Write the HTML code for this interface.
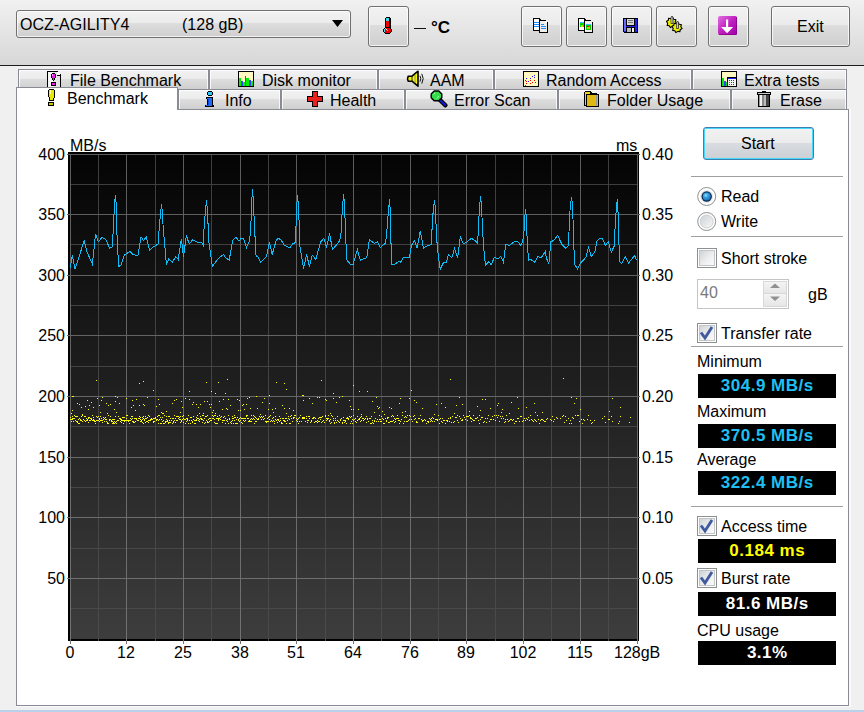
<!DOCTYPE html>
<html><head><meta charset="utf-8">
<style>
*{box-sizing:border-box}
html,body{margin:0;padding:0}
body{width:864px;height:712px;position:relative;overflow:hidden;background:#f0f0f0;font-family:"Liberation Sans",sans-serif;font-size:16px;color:#000}
.a{position:absolute}
.t{position:absolute;white-space:nowrap;line-height:18px;font-size:16px;margin-top:1px;margin-left:-1px}
.btn{position:absolute;border:1px solid #707070;border-radius:3px;background:linear-gradient(#f2f2f2 0%,#ebebeb 47%,#dddddd 47%,#cfcfcf 100%);box-shadow:inset 0 0 0 1px rgba(255,255,255,.75)}
.tab{position:absolute;border:1px solid #898c95;border-bottom:none;background:linear-gradient(#f2f2f2 0%,#ebebeb 50%,#dddddd 50%,#cfcfcf 100%);box-shadow:inset 1px 1px 0 rgba(255,255,255,.8),inset -1px 0 0 rgba(255,255,255,.8)}
.sep{position:absolute;height:1px;background:#a0a0a0;left:691px;width:152px}
.chk{position:absolute;width:20px;height:20px;border:1px solid #8e8f8f;background:#fff}.chk::after{content:"";position:absolute;left:1px;top:1px;right:1px;bottom:1px;border:1px solid #c2c6ca;background:linear-gradient(135deg,#d0d4d8,#f0f0f0 60%,#fafafa)}
.t.r{margin-left:0}
.box{position:absolute;left:698px;width:138px;height:24px;background:#000;color:#fff;font-weight:bold;font-size:17px;text-align:center;line-height:24px;letter-spacing:0.5px;text-indent:0.5px}
.yl{position:absolute;left:20px;width:45px;text-align:right;font-size:16px;line-height:20px;margin-top:1px}
.yr{position:absolute;left:642px;margin-top:1px;width:45px;text-align:left;font-size:16px;line-height:20px}
.xl{position:absolute;top:643px;width:80px;text-align:center;font-size:16px;line-height:20px}
</style></head><body>

<!-- toolbar -->
<div class="a" style="left:0;top:0;width:864px;height:65px;background:linear-gradient(#f1f1f1,#d7d7d7)"></div>
<div class="a" style="left:0;top:65px;width:864px;height:1px;background:#1c1c1c"></div>

<!-- combo -->
<div class="btn" style="left:16px;top:10px;width:335px;height:28px"></div>
<div class="t r" style="left:20px;top:15px">OCZ-AGILITY4</div>
<div class="t r" style="left:182px;top:15px">(128 gB)</div>
<svg class="a" style="left:332px;top:20px" width="12" height="8"><path d="M0 0H11L5.5 7Z" fill="#000"/></svg>

<!-- thermometer button -->
<div class="btn" style="left:368px;top:6px;width:41px;height:41px"></div>
<svg class="a" style="left:383px;top:17px" width="10" height="17" shape-rendering="crispEdges">
 <rect x="3" y="0" width="4" height="1" fill="#000"/><rect x="2" y="1" width="6" height="10" fill="#000"/>
 <rect x="3" y="1" width="3" height="3" fill="#3ad8e8"/>
 <rect x="3" y="4" width="3" height="7" fill="#f00000"/>
 <path d="M2 10H7V11H8V12H9V15H8V16H7V17H2V16H1V15H0V12H1V11H2Z" fill="#000"/>
 <path d="M2 11H7V12H8V15H7V16H2V15H1V12H2Z" fill="#ee0000"/>
 <rect x="1" y="12" width="1" height="3" fill="#5cd6e6"/><rect x="2" y="11" width="1" height="1" fill="#5cd6e6"/>
 <rect x="3" y="12" width="1" height="1" fill="#ffe8e8"/><rect x="4" y="13" width="1" height="1" fill="#ffb0b0"/>
</svg>
<div class="a" style="left:414px;top:28px;width:12px;height:1px;background:#111"></div>
<div class="t r" style="left:431px;top:18px;font-weight:bold;font-size:17px">°C</div>

<!-- toolbar buttons -->
<div class="btn" style="left:521px;top:6px;width:41px;height:41px"></div>
<div class="btn" style="left:566px;top:6px;width:41px;height:41px"></div>
<div class="btn" style="left:611px;top:6px;width:41px;height:41px"></div>
<div class="btn" style="left:656px;top:6px;width:41px;height:41px"></div>
<div class="btn" style="left:708px;top:6px;width:41px;height:41px"></div>
<div class="btn" style="left:771px;top:6px;width:79px;height:41px"></div>
<div class="t r" style="left:797px;top:17px">Exit</div>

<!-- copy icon -->
<svg class="a" style="left:533px;top:18px" width="17" height="16" shape-rendering="crispEdges">
 <path d="M0 0h6l2 2v11h-8z" fill="#000"/><rect x="1" y="1" width="5" height="11" fill="#fff"/>
 <rect x="1" y="4" width="5" height="1" fill="#1a8cff"/><rect x="1" y="6" width="5" height="1" fill="#1a8cff"/><rect x="1" y="8" width="5" height="1" fill="#1a8cff"/>
 <path d="M6 2h6l3 3v10h-9z" fill="#000"/><rect x="7" y="3" width="7" height="11" fill="#eee"/><rect x="12" y="3" width="2" height="2" fill="#fff"/>
 <rect x="8" y="6" width="3" height="1" fill="#1a8cff"/><rect x="8" y="8" width="5" height="1" fill="#1a8cff"/><rect x="8" y="10" width="5" height="1" fill="#1a8cff"/>
</svg>
<!-- copy image icon -->
<svg class="a" style="left:578px;top:18px" width="17" height="16" shape-rendering="crispEdges">
 <path d="M0 0h6l2 2v11h-8z" fill="#000"/><rect x="1" y="1" width="5" height="11" fill="#fff"/>
 <rect x="2" y="4" width="4" height="1" fill="#33bbff"/><rect x="2" y="5" width="4" height="4" fill="#00dd00"/><rect x="3" y="6" width="1" height="1" fill="#ff0000"/><rect x="3" y="7" width="2" height="2" fill="#dddd00"/>
 <path d="M6 2h6l3 3v10h-9z" fill="#000"/><rect x="7" y="3" width="7" height="11" fill="#eee"/>
 <rect x="8" y="6" width="5" height="1" fill="#33bbff"/><rect x="8" y="7" width="5" height="5" fill="#00cc00"/><rect x="9" y="8" width="2" height="1" fill="#ff0000"/><rect x="9" y="9" width="3" height="2" fill="#cccc00"/>
</svg>
<!-- floppy -->
<svg class="a" style="left:623px;top:18px" width="16" height="16" shape-rendering="crispEdges">
 <path d="M0 0h15v15h-14l-1-1z" fill="#000"/>
 <rect x="1" y="1" width="13" height="13" fill="#2222ee"/>
 <rect x="1" y="1" width="2" height="12" fill="#6a6aff"/>
 <rect x="3" y="1" width="9" height="7" fill="#000"/><rect x="4" y="1" width="7" height="6" fill="#d8d8d8"/>
 <rect x="5" y="2" width="5" height="1" fill="#777"/><rect x="5" y="4" width="5" height="1" fill="#777"/>
 <rect x="3" y="9" width="9" height="5" fill="#000"/><rect x="4" y="10" width="4" height="4" fill="#bbb"/><rect x="9" y="10" width="2" height="4" fill="#eee"/>
</svg>
<!-- gears -->
<svg class="a" style="left:666px;top:15px" width="19" height="20">
 <polygon points="10.60,8.53 8.73,9.68 8.37,11.83 6.25,11.33 4.47,12.60 3.32,10.73 1.17,10.37 1.67,8.25 0.40,6.47 2.27,5.32 2.63,3.17 4.75,3.67 6.53,2.40 7.68,4.27 9.83,4.63 9.33,6.75" fill="#eeee00" stroke="#000" stroke-width="1.1" stroke-linejoin="round"/>
 <path d="M5 2.2L6 1L7 2.2V8.5H5Z" fill="#9a9a9a" stroke="#222" stroke-width=".7"/><path d="M5.8 2.5V8" stroke="#eee" stroke-width=".6"/>
 <polygon points="16.10,13.53 14.23,14.68 13.87,16.83 11.75,16.33 9.97,17.60 8.82,15.73 6.67,15.37 7.17,13.25 5.90,11.47 7.77,10.32 8.13,8.17 10.25,8.67 12.03,7.40 13.18,9.27 15.33,9.63 14.83,11.75" fill="#eeee00" stroke="#000" stroke-width="1.1" stroke-linejoin="round"/>
 <path d="M10.5 7.2L11.5 6L12.5 7.2V13.5H10.5Z" fill="#9a9a9a" stroke="#222" stroke-width=".7"/><path d="M11.3 7.5V13" stroke="#eee" stroke-width=".6"/>
</svg>
<!-- purple -->
<svg class="a" style="left:718px;top:16px" width="19" height="19">
 <defs><linearGradient id="pg" x1="0" y1="0" x2="1" y2="1"><stop offset="0" stop-color="#e070e0"/><stop offset=".5" stop-color="#c020c0"/><stop offset="1" stop-color="#a000a8"/></linearGradient></defs>
 <rect x="0" y="0" width="19" height="19" rx="2" fill="url(#pg)"/>
 <path d="M8 3.5h2.2v7.5h4.9l-6 6.3l-6-6.3h4.9z" fill="#fff"/><path d="M1 18.5H18.5V1" fill="none" stroke="#7a0080" stroke-width="1" opacity=".7"/>
</svg>

<!-- tabs row 1 -->
<div class="tab" style="left:18px;top:69px;width:191px;height:20px"></div>
<div class="tab" style="left:209px;top:69px;width:169px;height:20px"></div>
<div class="tab" style="left:378px;top:69px;width:116px;height:20px"></div>
<div class="tab" style="left:494px;top:69px;width:198px;height:20px"></div>
<div class="tab" style="left:692px;top:69px;width:155px;height:20px"></div>
<div class="t r" style="left:70px;top:71px">File Benchmark</div>
<div class="t r" style="left:262px;top:71px">Disk monitor</div>
<div class="t r" style="left:430px;top:71px">AAM</div>
<div class="t r" style="left:546px;top:71px">Random Access</div>
<div class="t r" style="left:744px;top:71px">Extra tests</div>

<!-- row1 icons -->
<svg class="a" style="left:47px;top:71px" width="15" height="17" shape-rendering="crispEdges">
 <path d="M0 0h10l4 4v13h-14z" fill="#000"/><path d="M1 1h9v4h3v11h-12z" fill="#e4e4e4"/><path d="M1 1h5v15h-5z" fill="#f6f6f6"/><path d="M10 1h1l2 2v1h-3z" fill="#fff"/>
 <path d="M5 2h3v1h1v4h-1v2h-1v1h-1v-1h-1v-2h-1v-4h1z" fill="#000"/><path d="M5 3h3v4h-1v2h-1v-2h-1z" fill="#e81ee8"/><rect x="5" y="3" width="1" height="2" fill="#ff9cff"/>
 <rect x="4" y="11" width="5" height="4" fill="#000"/><rect x="5" y="12" width="3" height="2" fill="#e81ee8"/>
</svg>
<svg class="a" style="left:238px;top:71px" width="17" height="17" shape-rendering="crispEdges">
 <rect x="0" y="0" width="16" height="16" fill="#000"/><rect x="1" y="1" width="14" height="14" fill="#fff8c0"/>
 <rect x="1" y="7" width="2" height="8" fill="#00ee00"/><rect x="3" y="10" width="2" height="5" fill="#4040ff"/><rect x="5" y="11" width="2" height="4" fill="#00ee00"/><rect x="7" y="5" width="1" height="10" fill="#4040ff"/><rect x="8" y="7" width="3" height="8" fill="#00ee00"/><rect x="11" y="9" width="2" height="6" fill="#4040ff"/><rect x="13" y="10" width="2" height="5" fill="#00ee00"/>
</svg>
<svg class="a" style="left:406px;top:70px" width="19" height="18">
 <path d="M2.2 6.2Q1 8.7 2.2 11.2H6L12 16.2V1.2L6 6.2Z" fill="#f4f400" stroke="#000" stroke-width="1.6" stroke-linejoin="round"/>
 <path d="M6 6.5V11" stroke="#222" stroke-width="1"/><path d="M9 5v8" stroke="#777" stroke-width=".8"/>
 <path d="M14 5.8Q15.6 8.7 14 11.6M15.8 3.8Q18.6 8.7 15.8 13.6" fill="none" stroke="#111" stroke-width="1"/>
</svg>
<svg class="a" style="left:523px;top:71px" width="17" height="17" shape-rendering="crispEdges">
 <rect x="0" y="0" width="16" height="16" fill="#000"/><rect x="1" y="1" width="14" height="14" fill="#fff8c0"/>
 <g fill="#2020ff"><rect x="3" y="7" width="1" height="1"/><rect x="2" y="9" width="1" height="1"/><rect x="5" y="10" width="1" height="1"/><rect x="7" y="7" width="1" height="1"/><rect x="9" y="5" width="1" height="1"/><rect x="11" y="4" width="1" height="1"/><rect x="11" y="6" width="1" height="1"/></g>
 <g fill="#ff0000"><rect x="3" y="10" width="1" height="1"/><rect x="3" y="12" width="1" height="1"/><rect x="2" y="14" width="1" height="1"/><rect x="7" y="9" width="1" height="1"/><rect x="7" y="12" width="1" height="1"/><rect x="9" y="11" width="1" height="1"/><rect x="11" y="9" width="1" height="1"/><rect x="12" y="11" width="1" height="1"/></g>
</svg>
<svg class="a" style="left:721px;top:71px" width="17" height="17" shape-rendering="crispEdges">
 <rect x="0" y="0" width="16" height="16" fill="#000"/><rect x="1" y="1" width="14" height="14" fill="#fff8c0"/>
 <rect x="1" y="7" width="2" height="8" fill="#00ee00"/><rect x="3" y="10" width="2" height="5" fill="#4040ff"/><rect x="5" y="11" width="1" height="4" fill="#00ee00"/>
 <rect x="6" y="6" width="10" height="10" fill="#000"/><rect x="7" y="7" width="8" height="1" fill="#2020ff"/><rect x="7" y="8" width="8" height="7" fill="#f4f4f4"/>
 <rect x="8" y="9" width="1" height="1" fill="#f00"/><rect x="10" y="9" width="1" height="1" fill="#22f"/><rect x="12" y="9" width="1" height="1" fill="#f00"/>
 <rect x="8" y="11" width="1" height="1" fill="#0c0"/><rect x="10" y="11" width="1" height="1" fill="#f00"/><rect x="12" y="11" width="1" height="1" fill="#f00"/>
 <rect x="8" y="13" width="1" height="1" fill="#f00"/><rect x="10" y="13" width="1" height="1" fill="#f00"/><rect x="12" y="13" width="1" height="1" fill="#22f"/>
</svg>

<!-- panel -->
<div class="a" style="left:16px;top:109px;width:835px;height:598px;background:#fafafa"></div>
<div class="a" style="left:16px;top:109px;width:833px;height:597px;background:#fff;border:1px solid #898c95"></div>

<!-- tabs row 2 -->
<div class="tab" style="left:178px;top:89px;width:103px;height:20px"></div>
<div class="tab" style="left:281px;top:89px;width:124px;height:20px"></div>
<div class="tab" style="left:405px;top:89px;width:153px;height:20px"></div>
<div class="tab" style="left:558px;top:89px;width:173px;height:20px"></div>
<div class="tab" style="left:731px;top:89px;width:116px;height:20px"></div>
<div class="a" style="left:16px;top:87px;width:162px;height:23px;background:#fff;border:1px solid #898c95;border-bottom:none"></div>
<div class="t" style="left:68px;top:89px">Benchmark</div>
<div class="t" style="left:226px;top:91px">Info</div>
<div class="t" style="left:331px;top:91px">Health</div>
<div class="t" style="left:455px;top:91px">Error Scan</div>
<div class="t" style="left:608px;top:91px">Folder Usage</div>
<div class="t" style="left:781px;top:91px">Erase</div>

<!-- row2 icons -->
<svg class="a" style="left:47px;top:89px" width="9" height="17" shape-rendering="crispEdges">
 <path d="M2 0h4l2 2v6l-1 1v3h-5v-3l-1-1v-6z" fill="#000"/><path d="M2 1h4l1 1v6l-1 1v2h-3v-2l-1-1v-6z" fill="#e8e800"/><rect x="3" y="1" width="1" height="4" fill="#ffff99"/>
 <rect x="1" y="13" width="6" height="4" fill="#000"/><rect x="2" y="14" width="4" height="2" fill="#c8c800"/>
</svg>
<svg class="a" style="left:205px;top:90px" width="10" height="18" shape-rendering="crispEdges">
 <path d="M3 1h4v1h1v3h-1v1h-4v-1h-1v-3h1z" fill="#000"/><path d="M3 2h4v3h-4z" fill="#28c8ff"/>
 <path d="M1 7h7v8h1v2h-9v-2h2v-6h-1z" fill="#000"/><path d="M2 8h5v8h-6v-1h1.5v-6.5h-0.5z" fill="#1a6cff"/><rect x="3" y="9" width="1" height="6" fill="#0a4ae0"/>
</svg>
<svg class="a" style="left:307px;top:91px" width="17" height="16" shape-rendering="crispEdges">
 <path d="M5 0h6v5h5v6h-5v5h-6v-5h-5v-6h5z" fill="#000"/>
 <path d="M6 1h4v5h5v4h-5v5h-4v-5h-5v-4h5z" fill="#e82020"/>
</svg>
<svg class="a" style="left:430px;top:90px" width="18" height="18">
 <path d="M8.5 8.5L15.3 15.3" stroke="#000" stroke-width="4.4" stroke-linecap="round"/><path d="M9 9L15 15" stroke="#1414c8" stroke-width="2.3" stroke-linecap="round"/>
 <polygon points="4.2,1 8.8,1 11.8,4 11.8,7.8 8.8,10.8 4.2,10.8 1.2,7.8 1.2,4" fill="#34dc4c" stroke="#000" stroke-width="1.4" stroke-linejoin="round"/>
 <path d="M3.5 4.5L5 3M6.5 8.5L9 6" stroke="#c8ffd0" stroke-width=".8"/>
</svg>
<svg class="a" style="left:584px;top:90px" width="16" height="17" shape-rendering="crispEdges">
 <path d="M1 1h5l2 2h5v13h-13v-14z" fill="#000"/><rect x="1" y="2" width="5" height="13" fill="#f0d020"/>
 <rect x="2" y="4" width="13" height="13" fill="#000"/><rect x="3" y="5" width="11" height="11" fill="#e0b810"/><rect x="12" y="5" width="1" height="11" fill="#999"/>
</svg>
<svg class="a" style="left:757px;top:91px" width="15" height="16" shape-rendering="crispEdges">
 <rect x="0" y="1" width="14" height="3" fill="#000"/><rect x="5" y="0" width="4" height="2" fill="#000"/>
 <rect x="1" y="3" width="12" height="13" fill="#000"/>
 <rect x="2" y="4" width="1" height="11" fill="#999"/><rect x="3" y="4" width="2" height="11" fill="#f0f0f0"/><rect x="5" y="4" width="2" height="11" fill="#888"/><rect x="7" y="4" width="2" height="11" fill="#bbb"/><rect x="9" y="4" width="3" height="11" fill="#444"/>
 <rect x="1" y="2" width="12" height="1" fill="#ccc"/>
</svg>

<!-- chart -->
<svg class="a" style="left:0;top:0" width="864" height="712">
 <defs>
  <linearGradient id="cbg" x1="0" y1="0" x2="0" y2="1"><stop offset="0" stop-color="#040404"/><stop offset="1" stop-color="#3d3d3d"/></linearGradient>
 </defs>
 <rect x="68" y="152" width="571" height="489" fill="#000"/>
 <rect x="70" y="154" width="568" height="485" fill="url(#cbg)"/>
 <rect x="638" y="152" width="1" height="489" fill="#000"/>
 <rect x="68" y="639" width="571" height="2" fill="#000"/>
 <linearGradient id="gmin" gradientUnits="userSpaceOnUse" x1="0" y1="154" x2="0" y2="644"><stop offset="0" stop-color="#3e3e3e"/><stop offset="1" stop-color="#4a4a4a"/></linearGradient>
 <linearGradient id="gmaj" gradientUnits="userSpaceOnUse" x1="0" y1="154" x2="0" y2="644"><stop offset="0" stop-color="#5c5c5c"/><stop offset="1" stop-color="#727272"/></linearGradient>
 <path d="M70 184.5H638M70 244.5H638M70 305.5H638M70 366.5H638M70 426.5H638M70 487.5H638M70 548.5H638M70 608.5H638M98.5 154V641M155.5 154V641M211.5 154V641M268.5 154V641M325.5 154V641M381.5 154V641M438.5 154V641M495.5 154V641M551.5 154V641M608.5 154V641" stroke="url(#gmin)" stroke-width="1" fill="none"/>
 <path d="M67 154.5H640M67 214.5H640M67 275.5H640M67 335.5H640M67 396.5H640M67 457.5H640M67 517.5H640M67 578.5H640M70.5 154V644M126.5 154V644M183.5 154V644M240.5 154V644M296.5 154V644M353.5 154V644M410.5 154V644M466.5 154V644M523.5 154V644M580.5 154V644M637.5 154V644" stroke="url(#gmaj)" stroke-width="1" fill="none"/>
 <path d="M70 417h1v1h-1zM70 419h1v1h-1zM71 419h1v1h-1zM71 421h1v1h-1zM71 413h1v1h-1zM72 419h1v1h-1zM72 416h1v1h-1zM72 418h1v1h-1zM72 410h1v1h-1zM72 396h1v1h-1zM73 418h1v1h-1zM73 421h1v1h-1zM73 421h1v1h-1zM73 396h1v1h-1zM74 418h1v1h-1zM74 415h1v1h-1zM75 420h1v1h-1zM75 416h1v1h-1zM76 416h1v1h-1zM76 421h1v1h-1zM77 422h1v1h-1zM77 416h1v1h-1zM77 421h1v1h-1zM77 403h1v1h-1zM78 423h1v1h-1zM78 419h1v1h-1zM79 418h1v1h-1zM79 423h1v1h-1zM79 404h1v1h-1zM80 420h1v1h-1zM80 419h1v1h-1zM81 416h1v1h-1zM81 420h1v1h-1zM81 407h1v1h-1zM82 415h1v1h-1zM82 421h1v1h-1zM82 414h1v1h-1zM83 419h1v1h-1zM83 419h1v1h-1zM84 420h1v1h-1zM84 416h1v1h-1zM85 421h1v1h-1zM85 416h1v1h-1zM85 406h1v1h-1zM86 420h1v1h-1zM86 418h1v1h-1zM87 420h1v1h-1zM87 419h1v1h-1zM87 400h1v1h-1zM88 418h1v1h-1zM88 417h1v1h-1zM88 422h1v1h-1zM88 409h1v1h-1zM89 417h1v1h-1zM89 420h1v1h-1zM89 405h1v1h-1zM90 420h1v1h-1zM90 418h1v1h-1zM91 419h1v1h-1zM91 418h1v1h-1zM91 402h1v1h-1zM92 415h1v1h-1zM92 420h1v1h-1zM93 417h1v1h-1zM93 419h1v1h-1zM93 420h1v1h-1zM93 407h1v1h-1zM94 420h1v1h-1zM94 421h1v1h-1zM95 423h1v1h-1zM95 421h1v1h-1zM96 416h1v1h-1zM96 420h1v1h-1zM96 380h1v1h-1zM97 420h1v1h-1zM97 417h1v1h-1zM97 398h1v1h-1zM98 420h1v1h-1zM98 416h1v1h-1zM99 418h1v1h-1zM99 421h1v1h-1zM99 419h1v1h-1zM99 405h1v1h-1zM100 420h1v1h-1zM100 416h1v1h-1zM100 412h1v1h-1zM101 420h1v1h-1zM101 418h1v1h-1zM101 400h1v1h-1zM102 420h1v1h-1zM102 422h1v1h-1zM102 397h1v1h-1zM103 419h1v1h-1zM103 417h1v1h-1zM104 418h1v1h-1zM104 421h1v1h-1zM105 419h1v1h-1zM105 417h1v1h-1zM105 419h1v1h-1zM106 419h1v1h-1zM106 421h1v1h-1zM106 403h1v1h-1zM107 422h1v1h-1zM107 423h1v1h-1zM107 413h1v1h-1zM108 415h1v1h-1zM108 423h1v1h-1zM108 405h1v1h-1zM109 419h1v1h-1zM109 420h1v1h-1zM110 419h1v1h-1zM110 416h1v1h-1zM110 404h1v1h-1zM111 420h1v1h-1zM111 421h1v1h-1zM112 421h1v1h-1zM112 419h1v1h-1zM112 423h1v1h-1zM113 419h1v1h-1zM113 423h1v1h-1zM113 422h1v1h-1zM114 423h1v1h-1zM114 421h1v1h-1zM114 419h1v1h-1zM114 409h1v1h-1zM115 416h1v1h-1zM115 422h1v1h-1zM115 401h1v1h-1zM115 396h1v1h-1zM116 423h1v1h-1zM116 421h1v1h-1zM116 412h1v1h-1zM117 420h1v1h-1zM117 420h1v1h-1zM117 397h1v1h-1zM118 416h1v1h-1zM118 420h1v1h-1zM119 418h1v1h-1zM119 418h1v1h-1zM119 403h1v1h-1zM120 421h1v1h-1zM120 419h1v1h-1zM120 418h1v1h-1zM121 422h1v1h-1zM121 419h1v1h-1zM121 420h1v1h-1zM122 420h1v1h-1zM122 417h1v1h-1zM123 420h1v1h-1zM123 423h1v1h-1zM123 417h1v1h-1zM124 417h1v1h-1zM124 420h1v1h-1zM124 421h1v1h-1zM125 420h1v1h-1zM125 420h1v1h-1zM126 420h1v1h-1zM126 415h1v1h-1zM126 418h1v1h-1zM126 398h1v1h-1zM127 420h1v1h-1zM127 415h1v1h-1zM128 421h1v1h-1zM128 420h1v1h-1zM129 420h1v1h-1zM129 420h1v1h-1zM129 423h1v1h-1zM130 418h1v1h-1zM130 420h1v1h-1zM131 419h1v1h-1zM131 416h1v1h-1zM131 407h1v1h-1zM132 416h1v1h-1zM132 418h1v1h-1zM132 421h1v1h-1zM132 400h1v1h-1zM133 422h1v1h-1zM133 421h1v1h-1zM133 421h1v1h-1zM133 405h1v1h-1zM134 418h1v1h-1zM134 422h1v1h-1zM135 421h1v1h-1zM135 418h1v1h-1zM135 410h1v1h-1zM136 419h1v1h-1zM136 418h1v1h-1zM136 399h1v1h-1zM137 420h1v1h-1zM137 420h1v1h-1zM137 420h1v1h-1zM138 418h1v1h-1zM138 420h1v1h-1zM139 418h1v1h-1zM139 416h1v1h-1zM139 405h1v1h-1zM139 383h1v1h-1zM140 417h1v1h-1zM140 419h1v1h-1zM140 421h1v1h-1zM141 420h1v1h-1zM141 421h1v1h-1zM141 420h1v1h-1zM142 422h1v1h-1zM142 417h1v1h-1zM142 419h1v1h-1zM143 416h1v1h-1zM143 423h1v1h-1zM143 418h1v1h-1zM143 404h1v1h-1zM143 381h1v1h-1zM144 419h1v1h-1zM144 420h1v1h-1zM144 405h1v1h-1zM145 422h1v1h-1zM145 418h1v1h-1zM145 416h1v1h-1zM146 418h1v1h-1zM146 421h1v1h-1zM146 418h1v1h-1zM147 421h1v1h-1zM147 417h1v1h-1zM147 397h1v1h-1zM148 415h1v1h-1zM148 422h1v1h-1zM148 420h1v1h-1zM149 420h1v1h-1zM149 416h1v1h-1zM150 420h1v1h-1zM150 419h1v1h-1zM151 418h1v1h-1zM151 419h1v1h-1zM151 418h1v1h-1zM152 419h1v1h-1zM152 419h1v1h-1zM153 421h1v1h-1zM153 422h1v1h-1zM153 418h1v1h-1zM153 390h1v1h-1zM154 421h1v1h-1zM154 418h1v1h-1zM155 417h1v1h-1zM155 417h1v1h-1zM155 418h1v1h-1zM156 420h1v1h-1zM156 419h1v1h-1zM156 406h1v1h-1zM157 419h1v1h-1zM157 419h1v1h-1zM157 416h1v1h-1zM158 420h1v1h-1zM158 423h1v1h-1zM158 415h1v1h-1zM158 399h1v1h-1zM159 419h1v1h-1zM159 415h1v1h-1zM159 404h1v1h-1zM160 423h1v1h-1zM160 417h1v1h-1zM161 419h1v1h-1zM161 423h1v1h-1zM161 412h1v1h-1zM162 421h1v1h-1zM162 417h1v1h-1zM162 413h1v1h-1zM163 423h1v1h-1zM163 420h1v1h-1zM163 413h1v1h-1zM164 423h1v1h-1zM164 415h1v1h-1zM165 421h1v1h-1zM165 422h1v1h-1zM166 421h1v1h-1zM166 419h1v1h-1zM166 416h1v1h-1zM166 411h1v1h-1zM167 421h1v1h-1zM167 420h1v1h-1zM168 423h1v1h-1zM168 416h1v1h-1zM168 422h1v1h-1zM169 420h1v1h-1zM169 416h1v1h-1zM169 422h1v1h-1zM170 418h1v1h-1zM170 418h1v1h-1zM170 422h1v1h-1zM171 420h1v1h-1zM171 420h1v1h-1zM172 418h1v1h-1zM172 423h1v1h-1zM172 403h1v1h-1zM173 418h1v1h-1zM173 421h1v1h-1zM173 422h1v1h-1zM174 420h1v1h-1zM174 415h1v1h-1zM174 420h1v1h-1zM174 400h1v1h-1zM175 418h1v1h-1zM175 422h1v1h-1zM176 416h1v1h-1zM176 420h1v1h-1zM176 399h1v1h-1zM177 420h1v1h-1zM177 416h1v1h-1zM177 420h1v1h-1zM178 418h1v1h-1zM178 418h1v1h-1zM178 416h1v1h-1zM179 419h1v1h-1zM179 417h1v1h-1zM180 416h1v1h-1zM180 422h1v1h-1zM180 419h1v1h-1zM180 412h1v1h-1zM181 420h1v1h-1zM181 421h1v1h-1zM181 420h1v1h-1zM181 401h1v1h-1zM182 416h1v1h-1zM182 419h1v1h-1zM182 407h1v1h-1zM183 418h1v1h-1zM183 422h1v1h-1zM183 415h1v1h-1zM184 419h1v1h-1zM184 419h1v1h-1zM185 419h1v1h-1zM185 423h1v1h-1zM185 398h1v1h-1zM186 421h1v1h-1zM186 418h1v1h-1zM186 421h1v1h-1zM187 420h1v1h-1zM187 419h1v1h-1zM187 418h1v1h-1zM188 415h1v1h-1zM188 423h1v1h-1zM189 420h1v1h-1zM189 420h1v1h-1zM189 399h1v1h-1zM189 391h1v1h-1zM190 423h1v1h-1zM190 417h1v1h-1zM191 420h1v1h-1zM191 417h1v1h-1zM191 417h1v1h-1zM192 422h1v1h-1zM192 422h1v1h-1zM192 421h1v1h-1zM192 404h1v1h-1zM193 419h1v1h-1zM193 416h1v1h-1zM193 402h1v1h-1zM194 423h1v1h-1zM194 420h1v1h-1zM195 423h1v1h-1zM195 420h1v1h-1zM196 417h1v1h-1zM196 419h1v1h-1zM196 420h1v1h-1zM196 404h1v1h-1zM197 418h1v1h-1zM197 415h1v1h-1zM198 420h1v1h-1zM198 418h1v1h-1zM198 407h1v1h-1zM199 421h1v1h-1zM199 419h1v1h-1zM199 413h1v1h-1zM200 418h1v1h-1zM200 416h1v1h-1zM200 404h1v1h-1zM201 419h1v1h-1zM201 418h1v1h-1zM202 415h1v1h-1zM202 419h1v1h-1zM202 422h1v1h-1zM203 420h1v1h-1zM203 415h1v1h-1zM203 413h1v1h-1zM204 418h1v1h-1zM204 423h1v1h-1zM204 401h1v1h-1zM205 416h1v1h-1zM205 422h1v1h-1zM206 416h1v1h-1zM206 420h1v1h-1zM206 382h1v1h-1zM207 415h1v1h-1zM207 421h1v1h-1zM207 422h1v1h-1zM207 401h1v1h-1zM208 419h1v1h-1zM208 422h1v1h-1zM209 421h1v1h-1zM209 418h1v1h-1zM209 404h1v1h-1zM210 420h1v1h-1zM210 418h1v1h-1zM210 420h1v1h-1zM210 407h1v1h-1zM211 420h1v1h-1zM211 420h1v1h-1zM211 404h1v1h-1zM211 391h1v1h-1zM212 418h1v1h-1zM212 415h1v1h-1zM212 412h1v1h-1zM213 416h1v1h-1zM213 418h1v1h-1zM213 410h1v1h-1zM214 415h1v1h-1zM214 422h1v1h-1zM214 419h1v1h-1zM215 415h1v1h-1zM215 423h1v1h-1zM215 413h1v1h-1zM215 393h1v1h-1zM216 418h1v1h-1zM216 423h1v1h-1zM217 423h1v1h-1zM217 418h1v1h-1zM217 416h1v1h-1zM218 418h1v1h-1zM218 420h1v1h-1zM218 419h1v1h-1zM218 382h1v1h-1zM219 415h1v1h-1zM219 418h1v1h-1zM219 401h1v1h-1zM220 417h1v1h-1zM220 419h1v1h-1zM221 416h1v1h-1zM221 416h1v1h-1zM222 420h1v1h-1zM222 422h1v1h-1zM222 420h1v1h-1zM222 409h1v1h-1zM223 420h1v1h-1zM223 417h1v1h-1zM223 399h1v1h-1zM224 416h1v1h-1zM224 420h1v1h-1zM225 418h1v1h-1zM225 423h1v1h-1zM225 393h1v1h-1zM226 420h1v1h-1zM226 420h1v1h-1zM226 408h1v1h-1zM227 421h1v1h-1zM227 419h1v1h-1zM227 409h1v1h-1zM227 379h1v1h-1zM228 423h1v1h-1zM228 415h1v1h-1zM228 399h1v1h-1zM229 418h1v1h-1zM229 419h1v1h-1zM230 422h1v1h-1zM230 422h1v1h-1zM230 405h1v1h-1zM231 421h1v1h-1zM231 423h1v1h-1zM232 418h1v1h-1zM232 416h1v1h-1zM232 420h1v1h-1zM233 423h1v1h-1zM233 418h1v1h-1zM234 420h1v1h-1zM234 417h1v1h-1zM234 415h1v1h-1zM235 423h1v1h-1zM235 417h1v1h-1zM236 419h1v1h-1zM236 423h1v1h-1zM237 423h1v1h-1zM237 417h1v1h-1zM237 399h1v1h-1zM238 420h1v1h-1zM238 419h1v1h-1zM238 410h1v1h-1zM239 418h1v1h-1zM239 421h1v1h-1zM239 400h1v1h-1zM240 420h1v1h-1zM240 417h1v1h-1zM240 410h1v1h-1zM241 418h1v1h-1zM241 422h1v1h-1zM242 423h1v1h-1zM242 418h1v1h-1zM242 405h1v1h-1zM243 418h1v1h-1zM243 420h1v1h-1zM243 404h1v1h-1zM244 421h1v1h-1zM244 418h1v1h-1zM244 409h1v1h-1zM245 420h1v1h-1zM245 418h1v1h-1zM246 415h1v1h-1zM246 416h1v1h-1zM246 404h1v1h-1zM247 415h1v1h-1zM247 418h1v1h-1zM247 398h1v1h-1zM248 421h1v1h-1zM248 418h1v1h-1zM249 420h1v1h-1zM249 421h1v1h-1zM249 397h1v1h-1zM250 421h1v1h-1zM250 419h1v1h-1zM250 408h1v1h-1zM251 418h1v1h-1zM251 415h1v1h-1zM251 421h1v1h-1zM252 419h1v1h-1zM252 419h1v1h-1zM253 418h1v1h-1zM253 415h1v1h-1zM254 416h1v1h-1zM254 423h1v1h-1zM254 419h1v1h-1zM255 421h1v1h-1zM255 417h1v1h-1zM256 421h1v1h-1zM256 418h1v1h-1zM256 396h1v1h-1zM257 419h1v1h-1zM257 419h1v1h-1zM257 408h1v1h-1zM258 419h1v1h-1zM258 418h1v1h-1zM259 416h1v1h-1zM259 416h1v1h-1zM260 417h1v1h-1zM260 417h1v1h-1zM260 414h1v1h-1zM261 419h1v1h-1zM261 416h1v1h-1zM262 417h1v1h-1zM262 417h1v1h-1zM262 402h1v1h-1zM263 416h1v1h-1zM263 419h1v1h-1zM264 418h1v1h-1zM264 418h1v1h-1zM264 398h1v1h-1zM265 415h1v1h-1zM265 421h1v1h-1zM266 421h1v1h-1zM266 422h1v1h-1zM267 418h1v1h-1zM267 421h1v1h-1zM268 417h1v1h-1zM268 421h1v1h-1zM268 409h1v1h-1zM269 419h1v1h-1zM269 416h1v1h-1zM269 403h1v1h-1zM269 395h1v1h-1zM270 421h1v1h-1zM270 415h1v1h-1zM271 420h1v1h-1zM271 420h1v1h-1zM272 418h1v1h-1zM272 421h1v1h-1zM272 409h1v1h-1zM273 420h1v1h-1zM273 417h1v1h-1zM273 412h1v1h-1zM274 421h1v1h-1zM274 423h1v1h-1zM275 419h1v1h-1zM275 416h1v1h-1zM275 408h1v1h-1zM276 420h1v1h-1zM276 420h1v1h-1zM276 382h1v1h-1zM277 422h1v1h-1zM277 419h1v1h-1zM278 420h1v1h-1zM278 419h1v1h-1zM279 416h1v1h-1zM279 421h1v1h-1zM280 420h1v1h-1zM280 418h1v1h-1zM281 423h1v1h-1zM281 422h1v1h-1zM282 423h1v1h-1zM282 418h1v1h-1zM282 405h1v1h-1zM283 418h1v1h-1zM283 420h1v1h-1zM284 421h1v1h-1zM284 420h1v1h-1zM284 408h1v1h-1zM284 383h1v1h-1zM285 421h1v1h-1zM285 418h1v1h-1zM286 423h1v1h-1zM286 418h1v1h-1zM286 413h1v1h-1zM286 389h1v1h-1zM287 420h1v1h-1zM288 416h1v1h-1zM288 418h1v1h-1zM289 423h1v1h-1zM289 419h1v1h-1zM289 408h1v1h-1zM290 423h1v1h-1zM290 416h1v1h-1zM291 415h1v1h-1zM291 418h1v1h-1zM292 421h1v1h-1zM292 421h1v1h-1zM293 418h1v1h-1zM293 417h1v1h-1zM293 410h1v1h-1zM294 415h1v1h-1zM294 417h1v1h-1zM295 415h1v1h-1zM295 415h1v1h-1zM296 420h1v1h-1zM296 418h1v1h-1zM297 419h1v1h-1zM297 421h1v1h-1zM298 423h1v1h-1zM298 418h1v1h-1zM299 417h1v1h-1zM299 421h1v1h-1zM300 415h1v1h-1zM300 415h1v1h-1zM301 421h1v1h-1zM301 421h1v1h-1zM302 418h1v1h-1zM302 417h1v1h-1zM302 395h1v1h-1zM303 417h1v1h-1zM303 418h1v1h-1zM303 400h1v1h-1zM303 395h1v1h-1zM304 418h1v1h-1zM304 417h1v1h-1zM305 421h1v1h-1zM305 421h1v1h-1zM306 416h1v1h-1zM306 418h1v1h-1zM307 420h1v1h-1zM307 422h1v1h-1zM308 420h1v1h-1zM308 416h1v1h-1zM309 416h1v1h-1zM309 418h1v1h-1zM309 398h1v1h-1zM310 422h1v1h-1zM311 421h1v1h-1zM311 420h1v1h-1zM312 418h1v1h-1zM312 403h1v1h-1zM313 417h1v1h-1zM313 418h1v1h-1zM314 417h1v1h-1zM314 422h1v1h-1zM315 421h1v1h-1zM315 418h1v1h-1zM316 421h1v1h-1zM317 420h1v1h-1zM317 422h1v1h-1zM317 397h1v1h-1zM318 421h1v1h-1zM318 418h1v1h-1zM319 421h1v1h-1zM319 417h1v1h-1zM319 397h1v1h-1zM320 417h1v1h-1zM320 419h1v1h-1zM321 417h1v1h-1zM321 422h1v1h-1zM321 380h1v1h-1zM322 416h1v1h-1zM322 421h1v1h-1zM323 420h1v1h-1zM324 422h1v1h-1zM325 416h1v1h-1zM325 415h1v1h-1zM325 399h1v1h-1zM326 418h1v1h-1zM326 420h1v1h-1zM326 400h1v1h-1zM327 418h1v1h-1zM327 419h1v1h-1zM328 418h1v1h-1zM328 415h1v1h-1zM329 421h1v1h-1zM329 420h1v1h-1zM330 423h1v1h-1zM330 419h1v1h-1zM330 413h1v1h-1zM331 422h1v1h-1zM331 415h1v1h-1zM332 416h1v1h-1zM333 420h1v1h-1zM333 418h1v1h-1zM333 398h1v1h-1zM333 393h1v1h-1zM334 422h1v1h-1zM334 423h1v1h-1zM335 420h1v1h-1zM335 418h1v1h-1zM336 422h1v1h-1zM336 402h1v1h-1zM337 416h1v1h-1zM337 420h1v1h-1zM338 421h1v1h-1zM339 422h1v1h-1zM339 397h1v1h-1zM340 419h1v1h-1zM340 420h1v1h-1zM341 418h1v1h-1zM342 422h1v1h-1zM342 423h1v1h-1zM342 396h1v1h-1zM343 417h1v1h-1zM343 420h1v1h-1zM344 420h1v1h-1zM344 422h1v1h-1zM345 420h1v1h-1zM345 421h1v1h-1zM346 418h1v1h-1zM346 423h1v1h-1zM347 417h1v1h-1zM347 418h1v1h-1zM348 418h1v1h-1zM348 419h1v1h-1zM349 416h1v1h-1zM349 400h1v1h-1zM350 417h1v1h-1zM350 423h1v1h-1zM350 406h1v1h-1zM351 421h1v1h-1zM351 416h1v1h-1zM351 409h1v1h-1zM352 423h1v1h-1zM352 419h1v1h-1zM353 420h1v1h-1zM353 415h1v1h-1zM353 409h1v1h-1zM353 385h1v1h-1zM354 419h1v1h-1zM355 418h1v1h-1zM355 421h1v1h-1zM356 422h1v1h-1zM357 416h1v1h-1zM357 420h1v1h-1zM358 419h1v1h-1zM358 409h1v1h-1zM359 418h1v1h-1zM359 419h1v1h-1zM359 391h1v1h-1zM360 421h1v1h-1zM360 417h1v1h-1zM361 420h1v1h-1zM361 416h1v1h-1zM361 414h1v1h-1zM362 418h1v1h-1zM363 420h1v1h-1zM363 418h1v1h-1zM364 419h1v1h-1zM365 418h1v1h-1zM366 416h1v1h-1zM366 422h1v1h-1zM367 418h1v1h-1zM367 419h1v1h-1zM367 391h1v1h-1zM368 421h1v1h-1zM369 418h1v1h-1zM369 418h1v1h-1zM370 418h1v1h-1zM370 423h1v1h-1zM371 423h1v1h-1zM371 416h1v1h-1zM372 420h1v1h-1zM372 422h1v1h-1zM372 401h1v1h-1zM373 423h1v1h-1zM374 420h1v1h-1zM374 421h1v1h-1zM374 412h1v1h-1zM375 418h1v1h-1zM376 421h1v1h-1zM376 397h1v1h-1zM377 419h1v1h-1zM377 406h1v1h-1zM378 421h1v1h-1zM378 421h1v1h-1zM378 408h1v1h-1zM379 419h1v1h-1zM379 415h1v1h-1zM379 407h1v1h-1zM380 419h1v1h-1zM380 421h1v1h-1zM381 416h1v1h-1zM381 421h1v1h-1zM382 418h1v1h-1zM382 411h1v1h-1zM383 419h1v1h-1zM383 423h1v1h-1zM384 423h1v1h-1zM384 414h1v1h-1zM385 418h1v1h-1zM386 420h1v1h-1zM386 421h1v1h-1zM387 418h1v1h-1zM387 417h1v1h-1zM388 417h1v1h-1zM388 422h1v1h-1zM389 422h1v1h-1zM389 407h1v1h-1zM390 421h1v1h-1zM391 421h1v1h-1zM391 416h1v1h-1zM391 408h1v1h-1zM392 421h1v1h-1zM392 415h1v1h-1zM393 416h1v1h-1zM393 420h1v1h-1zM394 418h1v1h-1zM394 422h1v1h-1zM395 421h1v1h-1zM395 419h1v1h-1zM396 418h1v1h-1zM397 415h1v1h-1zM397 418h1v1h-1zM398 420h1v1h-1zM398 418h1v1h-1zM399 420h1v1h-1zM399 423h1v1h-1zM399 403h1v1h-1zM400 421h1v1h-1zM400 421h1v1h-1zM400 398h1v1h-1zM401 419h1v1h-1zM402 415h1v1h-1zM402 415h1v1h-1zM402 412h1v1h-1zM403 423h1v1h-1zM404 417h1v1h-1zM404 421h1v1h-1zM405 416h1v1h-1zM405 411h1v1h-1zM406 421h1v1h-1zM406 417h1v1h-1zM407 421h1v1h-1zM407 415h1v1h-1zM408 420h1v1h-1zM409 415h1v1h-1zM409 419h1v1h-1zM409 398h1v1h-1zM410 416h1v1h-1zM411 419h1v1h-1zM411 390h1v1h-1zM412 421h1v1h-1zM413 416h1v1h-1zM413 416h1v1h-1zM414 415h1v1h-1zM414 419h1v1h-1zM414 400h1v1h-1zM415 418h1v1h-1zM416 422h1v1h-1zM416 421h1v1h-1zM416 402h1v1h-1zM417 422h1v1h-1zM417 422h1v1h-1zM418 418h1v1h-1zM419 418h1v1h-1zM420 415h1v1h-1zM420 415h1v1h-1zM421 419h1v1h-1zM422 420h1v1h-1zM422 421h1v1h-1zM422 408h1v1h-1zM423 420h1v1h-1zM424 419h1v1h-1zM425 420h1v1h-1zM426 423h1v1h-1zM427 421h1v1h-1zM427 421h1v1h-1zM428 421h1v1h-1zM428 422h1v1h-1zM429 418h1v1h-1zM430 419h1v1h-1zM430 421h1v1h-1zM431 420h1v1h-1zM431 418h1v1h-1zM432 417h1v1h-1zM432 421h1v1h-1zM433 418h1v1h-1zM434 421h1v1h-1zM434 414h1v1h-1zM435 419h1v1h-1zM436 419h1v1h-1zM436 404h1v1h-1zM437 419h1v1h-1zM437 420h1v1h-1zM438 415h1v1h-1zM439 423h1v1h-1zM439 419h1v1h-1zM440 418h1v1h-1zM441 421h1v1h-1zM441 403h1v1h-1zM442 422h1v1h-1zM442 418h1v1h-1zM443 420h1v1h-1zM444 420h1v1h-1zM445 423h1v1h-1zM445 407h1v1h-1zM446 420h1v1h-1zM447 421h1v1h-1zM447 420h1v1h-1zM448 418h1v1h-1zM449 421h1v1h-1zM450 418h1v1h-1zM450 417h1v1h-1zM450 379h1v1h-1zM451 422h1v1h-1zM452 416h1v1h-1zM453 422h1v1h-1zM454 421h1v1h-1zM454 413h1v1h-1zM455 417h1v1h-1zM456 417h1v1h-1zM456 405h1v1h-1zM457 420h1v1h-1zM457 415h1v1h-1zM458 422h1v1h-1zM459 416h1v1h-1zM459 397h1v1h-1zM460 418h1v1h-1zM461 420h1v1h-1zM462 420h1v1h-1zM462 419h1v1h-1zM462 404h1v1h-1zM463 415h1v1h-1zM464 417h1v1h-1zM465 419h1v1h-1zM466 416h1v1h-1zM467 416h1v1h-1zM467 420h1v1h-1zM468 416h1v1h-1zM469 415h1v1h-1zM469 411h1v1h-1zM470 417h1v1h-1zM470 418h1v1h-1zM471 421h1v1h-1zM471 418h1v1h-1zM472 419h1v1h-1zM473 420h1v1h-1zM473 415h1v1h-1zM474 420h1v1h-1zM475 418h1v1h-1zM476 418h1v1h-1zM477 417h1v1h-1zM477 406h1v1h-1zM478 420h1v1h-1zM479 415h1v1h-1zM479 423h1v1h-1zM480 419h1v1h-1zM480 410h1v1h-1zM481 417h1v1h-1zM482 417h1v1h-1zM482 399h1v1h-1zM483 422h1v1h-1zM484 421h1v1h-1zM485 418h1v1h-1zM485 399h1v1h-1zM486 422h1v1h-1zM487 418h1v1h-1zM488 415h1v1h-1zM489 421h1v1h-1zM490 419h1v1h-1zM490 408h1v1h-1zM491 419h1v1h-1zM492 416h1v1h-1zM493 419h1v1h-1zM494 415h1v1h-1zM495 420h1v1h-1zM496 415h1v1h-1zM497 417h1v1h-1zM497 405h1v1h-1zM498 415h1v1h-1zM498 403h1v1h-1zM499 421h1v1h-1zM500 416h1v1h-1zM501 418h1v1h-1zM501 412h1v1h-1zM502 416h1v1h-1zM502 409h1v1h-1zM503 418h1v1h-1zM504 422h1v1h-1zM505 421h1v1h-1zM505 419h1v1h-1zM506 415h1v1h-1zM507 419h1v1h-1zM508 421h1v1h-1zM509 420h1v1h-1zM509 413h1v1h-1zM510 419h1v1h-1zM511 419h1v1h-1zM511 402h1v1h-1zM512 420h1v1h-1zM513 419h1v1h-1zM514 423h1v1h-1zM515 421h1v1h-1zM516 421h1v1h-1zM517 418h1v1h-1zM517 397h1v1h-1zM518 418h1v1h-1zM518 408h1v1h-1zM519 421h1v1h-1zM520 416h1v1h-1zM521 416h1v1h-1zM522 421h1v1h-1zM523 420h1v1h-1zM524 418h1v1h-1zM525 420h1v1h-1zM526 418h1v1h-1zM526 407h1v1h-1zM527 419h1v1h-1zM528 417h1v1h-1zM529 420h1v1h-1zM530 415h1v1h-1zM531 419h1v1h-1zM532 420h1v1h-1zM533 421h1v1h-1zM534 419h1v1h-1zM534 403h1v1h-1zM535 420h1v1h-1zM535 412h1v1h-1zM536 421h1v1h-1zM537 415h1v1h-1zM538 419h1v1h-1zM539 423h1v1h-1zM540 420h1v1h-1zM541 419h1v1h-1zM542 419h1v1h-1zM542 412h1v1h-1zM543 420h1v1h-1zM544 421h1v1h-1zM545 421h1v1h-1zM546 419h1v1h-1zM547 418h1v1h-1zM550 419h1v1h-1zM551 420h1v1h-1zM552 416h1v1h-1zM553 421h1v1h-1zM554 419h1v1h-1zM556 417h1v1h-1zM557 418h1v1h-1zM560 418h1v1h-1zM562 416h1v1h-1zM563 415h1v1h-1zM563 378h1v1h-1zM564 422h1v1h-1zM565 416h1v1h-1zM566 420h1v1h-1zM568 418h1v1h-1zM569 423h1v1h-1zM570 420h1v1h-1zM571 423h1v1h-1zM571 397h1v1h-1zM572 417h1v1h-1zM573 418h1v1h-1zM574 403h1v1h-1zM575 415h1v1h-1zM576 398h1v1h-1zM577 415h1v1h-1zM578 415h1v1h-1zM579 421h1v1h-1zM580 409h1v1h-1zM581 419h1v1h-1zM582 423h1v1h-1zM583 419h1v1h-1zM584 420h1v1h-1zM587 419h1v1h-1zM588 415h1v1h-1zM590 420h1v1h-1zM591 423h1v1h-1zM592 422h1v1h-1zM594 420h1v1h-1zM602 418h1v1h-1zM604 416h1v1h-1zM605 422h1v1h-1zM608 419h1v1h-1zM609 419h1v1h-1zM609 411h1v1h-1zM611 416h1v1h-1zM612 421h1v1h-1zM612 398h1v1h-1zM618 423h1v1h-1zM619 421h1v1h-1zM620 416h1v1h-1zM620 407h1v1h-1zM629 422h1v1h-1zM630 417h1v1h-1z" fill="#ffff00"/>
 <polyline points="70.2,268.4 72.3,255.1 75.1,269.1 84.2,240.4 87.1,252.3 92.4,264.2 95.5,234 98.3,241.8 102.2,237.3 106,239.7 109.5,248.1 112.3,246.7 113.7,222.1 114.4,204.6 115.4,195.2 116.5,208 116.8,231.3 118.6,266.3 120.7,265.6 124.2,255.1 129.9,251.6 132.7,254.4 137.9,255.8 141.1,236.9 143.5,240.4 146.3,236.9 149.6,250.2 152.6,247.4 158.3,243.9 159.4,224.2 160.8,211.6 161.5,204.2 162.5,213 163.2,228.5 164.6,243.2 166.4,265 168.8,258.7 172.3,262.2 175.8,256.5 178.2,259.4 181.4,239 183.5,257.2 186.3,235.5 189.2,243.9 192.7,239.7 197.6,242.5 201.8,242.5 203.2,245.3 204.3,223.5 205.7,208.1 206.4,200.4 207.4,209.5 208.8,241.1 212.3,266.4 218,258.7 223.6,254.4 225.7,257.9 229.2,260.1 232.7,240.4 235.9,236.9 238.9,241.1 241.3,238.3 243.7,239 246.5,247.4 249.3,241.1 250.4,232.7 251.4,213.7 251.9,198.3 252.6,189.1 253.3,201.1 254.4,223.5 255.4,244.6 256.1,256.5 258.2,257.2 260.6,262.2 266.6,256.5 269.4,241.8 272.2,254.4 276.4,239.7 278.5,238.3 281.3,240.4 284.2,245.3 289.8,248.1 292.6,243.9 295.4,242.5 295.8,231.3 296.8,205.3 297.5,195.2 298.5,206.7 299.3,227.8 300,246.7 303.5,268.5 306.6,254.4 309.4,266.4 312.2,255.1 315.8,259.4 320.7,241.8 323.8,238.3 326.6,247.4 329.5,233.4 332.5,249.5 335.6,246 339.8,240.4 341.2,232 341.9,216.5 342.9,202.5 343.6,194 344.5,205.3 345.4,227 346.2,248.8 346.9,260.1 350.4,264.3 353.2,264.3 357.4,249.5 360.2,260.1 363.7,258.7 366.8,257.9 369.3,239.7 374.2,243.2 377.5,241.8 380.3,247.4 385.5,243.2 386.5,235.5 387.6,220.7 388.7,208.1 389.7,199 390.4,216.5 391.1,247.4 391.8,264.3 394.6,264.3 398.8,261.2 400.5,262.2 403.7,257.2 409.4,257.9 411.5,245.3 414.6,240.4 417.1,248.1 420.3,230.6 423.4,248.1 425.5,246.7 431.3,244.6 432.3,223.5 433.4,208.1 434.6,200.4 435.5,210.2 436.2,229.2 437.4,248.8 440.2,269.2 443.3,262.9 446.1,262.9 448.6,254.4 451.7,257.9 454.5,248.8 457.6,257.9 460.4,236.2 463.2,243.9 467.1,241.8 471.3,238.3 474.9,240.4 477.7,243.2 478.7,220.7 479.8,204.6 480.6,196.2 481.5,206.7 482.3,223.5 483.3,243.2 485.4,265 488.9,261.5 491,265 494.5,257.2 498,258.7 500.8,256.5 503.4,262.2 505.8,244.6 509.3,245.3 514.9,241.1 517.7,241.8 520.8,245.3 522.8,241.1 523.9,232.7 524.9,216.5 525.6,209.2 526.3,217.9 527,236.2 528.4,260.1 530.5,259.4 534.7,262.2 537.6,256.5 541.1,257.9 545.3,251.6 546.4,257.9 548.8,264.3 550.9,241.8 553.7,240.4 557.6,235.5 562.1,244.6 565.6,248.1 568.5,245.3 569.4,221.4 570.3,205.3 571.7,197.1 572.7,209.5 573.4,232 574.1,252.3 574.8,264.3 577.6,269.2 580.1,263.6 586,257.2 588.5,247.4 591.3,256.5 594.9,251.6 597,241.1 599.1,239 602.4,238.3 605.2,245.3 608.3,241.8 611.3,252.3 614.2,246 615.3,223.5 616.4,207.4 617.4,199 618.1,213.7 619.1,247.4 619.8,261.5 621.6,263.6 625.1,256.5 628.6,262.9 632.1,258.7 634.7,255.8 636.6,260.1" fill="none" stroke="#10bcf4" stroke-width="1" shape-rendering="crispEdges"/>
</svg>
<div class="t r" style="left:70px;top:136px">MB/s</div>
<div class="t" style="left:617px;top:136px">ms</div>
<div class="yl" style="top:144px">400</div><div class="yr" style="top:144px">0.40</div><div class="yl" style="top:204px">350</div><div class="yr" style="top:204px">0.35</div><div class="yl" style="top:265px">300</div><div class="yr" style="top:265px">0.30</div><div class="yl" style="top:325px">250</div><div class="yr" style="top:325px">0.25</div><div class="yl" style="top:386px">200</div><div class="yr" style="top:386px">0.20</div><div class="yl" style="top:447px">150</div><div class="yr" style="top:447px">0.15</div><div class="yl" style="top:507px">100</div><div class="yr" style="top:507px">0.10</div><div class="yl" style="top:568px">50</div><div class="yr" style="top:568px">0.05</div>
<div class="xl" style="left:30px">0</div><div class="xl" style="left:86px">12</div><div class="xl" style="left:143px">25</div><div class="xl" style="left:200px">38</div><div class="xl" style="left:256px">51</div><div class="xl" style="left:313px">64</div><div class="xl" style="left:370px">76</div><div class="xl" style="left:426px">89</div><div class="xl" style="left:483px">102</div><div class="xl" style="left:540px">115</div><div class="xl" style="left:614px;width:auto;text-align:left">128gB</div>

<!-- right panel -->
<div class="a" style="left:703px;top:127px;width:111px;height:33px;border:1px solid #3c7fb1;border-radius:3px;background:linear-gradient(#f2f2f2 0%,#ebebeb 47%,#d9dde2 47%,#ccd0d5 100%);box-shadow:inset 0 0 0 1px #48d8fb"></div>
<div class="t r" style="left:741px;top:134px">Start</div>
<div class="sep" style="top:176px"></div>

<svg class="a" style="left:697px;top:187px" width="20" height="20">
 <defs><radialGradient id="rb" cx=".4" cy=".35" r=".7"><stop offset="0" stop-color="#a8e4ff"/><stop offset=".35" stop-color="#3aa6e6"/><stop offset="1" stop-color="#1a68b0"/></radialGradient>
 <linearGradient id="rg" x1="0" y1="0" x2="1" y2="1"><stop offset="0" stop-color="#cdd1d5"/><stop offset="1" stop-color="#f8f8f8"/></linearGradient></defs>
 <circle cx="9.7" cy="9.5" r="9" fill="#fff" stroke="#8e8f8f" stroke-width="1"/>
 <circle cx="9.7" cy="9.5" r="6.5" fill="#e6e6e6"/>
 <circle cx="9.7" cy="9.5" r="5.2" fill="#0b2f55"/>
 <circle cx="9.7" cy="9.5" r="4" fill="url(#rb)"/>
</svg>
<div class="t r" style="left:721px;top:187px">Read</div>
<svg class="a" style="left:697px;top:212px" width="20" height="20">
 <circle cx="9.7" cy="9.5" r="9" fill="#fff" stroke="#8e8f8f" stroke-width="1"/>
 <circle cx="9.7" cy="9.5" r="6.5" fill="url(#rg)" stroke="#c4c8cc" stroke-width=".8"/>
</svg>
<div class="t r" style="left:721px;top:212px">Write</div>
<div class="sep" style="top:236px"></div>

<div class="chk" style="left:697px;top:248px"></div>
<div class="t r" style="left:721px;top:249px">Short stroke</div>
<div class="a" style="left:697px;top:279px;width:92px;height:30px;border:1px solid #c5c5c5;background:#fff"></div>
<div class="t r" style="left:700px;top:283px;color:#7a7a7a">40</div>
<div class="a" style="left:763px;top:281px;width:24px;height:13px;border:1px solid #d8d8d8;background:linear-gradient(#f4f4f4,#e6e6e6)"></div>
<div class="a" style="left:763px;top:293px;width:24px;height:14px;border:1px solid #d8d8d8;background:linear-gradient(#f4f4f4,#e6e6e6)"></div>
<svg class="a" style="left:769px;top:283px" width="12" height="20"><path d="M1 5h10l-5-4.5z" fill="#909090"/><path d="M1 13.5h10l-5 4.5z" fill="#909090"/></svg>
<div class="t r" style="left:808px;top:285px">gB</div>

<div class="chk" style="left:697px;top:323px"></div>
<svg class="a" style="left:699px;top:325px" width="16" height="16"><path d="M2 7.5l4 5.5l7-11" fill="none" stroke="#3f5a9e" stroke-width="2.9"/></svg>
<div class="t r" style="left:721px;top:324px">Transfer rate</div>
<div class="sep" style="top:346px"></div>

<div class="t r" style="left:697px;top:352px">Minimum</div>
<div class="box" style="top:374px;color:#1ec0f4">304.9 MB/s</div>
<div class="t r" style="left:697px;top:402px">Maximum</div>
<div class="box" style="top:424px;color:#1ec0f4">370.5 MB/s</div>
<div class="t r" style="left:697px;top:450px">Average</div>
<div class="box" style="top:471px;color:#1ec0f4">322.4 MB/s</div>
<div class="sep" style="top:506px"></div>

<div class="chk" style="left:697px;top:516px"></div>
<svg class="a" style="left:699px;top:518px" width="16" height="16"><path d="M2 7.5l4 5.5l7-11" fill="none" stroke="#3f5a9e" stroke-width="2.9"/></svg>
<div class="t r" style="left:721px;top:517px">Access time</div>
<div class="box" style="top:539px;color:#ffff00">0.184 ms</div>
<div class="chk" style="left:697px;top:568px"></div>
<svg class="a" style="left:699px;top:570px" width="16" height="16"><path d="M2 7.5l4 5.5l7-11" fill="none" stroke="#3f5a9e" stroke-width="2.9"/></svg>
<div class="t r" style="left:721px;top:569px">Burst rate</div>
<div class="box" style="top:592px">81.6 MB/s</div>
<div class="t r" style="left:697px;top:621px">CPU usage</div>
<div class="box" style="top:641px">3.1%</div>

<!-- bottom strip -->
<div class="a" style="left:0;top:710px;width:864px;height:2px;background:#b9d1ea"></div>
</body></html>
